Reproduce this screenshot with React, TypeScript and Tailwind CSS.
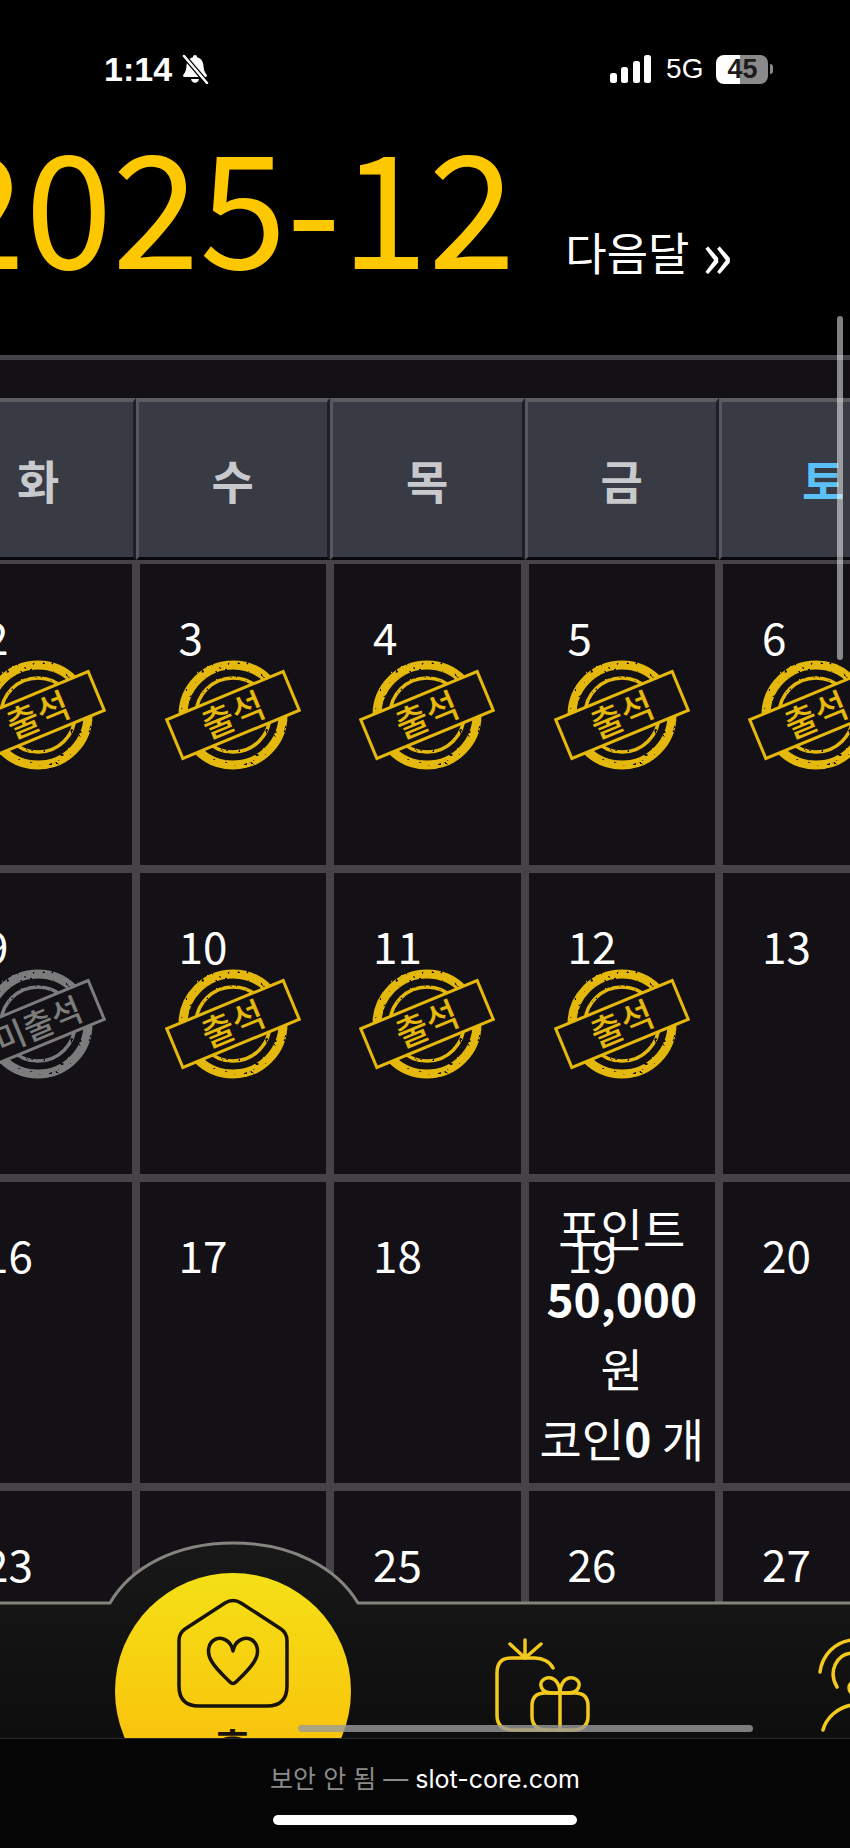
const FONT = "font-['Noto_Sans_CJK_KR','Noto_Sans',sans-serif]";

const WEEK = ['일', '월', '화', '수', '목', '금', '토'];

// december 2025 starts on a monday
const DAYS: (number | null)[] = [null, ...Array.from({ length: 31 }, (_, i) => i + 1)];
while (DAYS.length % 7) DAYS.push(null);

const ATTENDED = [1, 2, 3, 4, 5, 6, 8, 10, 11, 12];
const MISSED = [7, 9];

function Stamp({ label, color }: { label: string; color: string }) {
  return (
    <svg width="136" height="116" viewBox="0 0 136 116" fill="none">
      <defs>
        {/* worn ink look */}
        <filter id="worn" x="-5%" y="-5%" width="110%" height="110%">
          <feTurbulence type="fractalNoise" baseFrequency="0.22" numOctaves="2" seed="4" result="noise" />
          <feDisplacementMap in="SourceGraphic" in2="noise" scale="2" result="rough" />
          <feColorMatrix in="noise" type="matrix" values="0 0 0 0 0  0 0 0 0 0  0 0 0 0 0  0 0 0 -14 4.300" result="holes" />
          <feComposite in="rough" in2="holes" operator="out" />
        </filter>
      </defs>
      <g filter="url(#worn)">
        <circle cx="68" cy="58" r="50" stroke={color} strokeWidth="9" />
        <circle cx="68" cy="58" r="37" stroke={color} strokeWidth="3.500" />
      </g>
      <g transform="rotate(-22.5 68 58)">
        <rect x="5" y="37" width="126" height="42" fill="#131115" stroke={color} strokeWidth="3" />
        <text
          x="68"
          y="71"
          textAnchor="middle"
          fill={color}
          fontSize={label.length > 2 ? 33 : 35}
          fontWeight="500"
          fontFamily="'Noto Sans CJK KR', sans-serif"
        >
          {label}
        </text>
      </g>
    </svg>
  );
}

function DayCell({ day }: { day: number | null }) {
  const attended = day !== null && ATTENDED.includes(day);
  const missed = day !== null && MISSED.includes(day);

  return (
    <div className="relative h-[301px] bg-[#131115] pl-[39px] pt-[40px] text-[44px] leading-[64px] text-white">
      {day}
      {(attended || missed) && (
        <div className="absolute inset-0 flex items-center justify-center">
          <Stamp label={missed ? '미출석' : '출석'} color={missed ? '#7c7c7c' : '#e5b80b'} />
        </div>
      )}
      {day === 19 && (
        <div className="absolute inset-x-0 top-[10px] text-center text-[46px] leading-[70px]">
          <p>포인트</p>
          <p className="font-bold">50,000</p>
          <p>원</p>
          <p>코인<b>0</b> 개</p>
        </div>
      )}
    </div>
  );
}

function BellSlash() {
  return (
    <svg width="30" height="30" viewBox="0 0 30 30" fill="white">
      <path d="M15 1c1.300 0 2 .9 2 2.200 4.300 1 6.300 4.500 6.500 8.800.2 3.800 1 6 3 8.500.8 1 .3 2.500-1 2.500H4.500c-1.300 0-1.800-1.500-1-2.500 2-2.500 2.800-4.700 3-8.500.2-4.300 2.200-7.800 6.500-8.800C13 1.900 13.700 1 15 1z" />
      <path d="M11 25h8c-.3 2.400-2 3.800-4 3.800s-3.700-1.400-4-3.800z" />
      <path d="M4 2l23 27" stroke="black" strokeWidth="5" />
      <path d="M4 2l23 27" stroke="white" strokeWidth="2.500" strokeLinecap="round" />
    </svg>
  );
}

function StatusBar() {
  return (
    <div className="flex h-[116px] pt-[50px] font-['Liberation_Sans',sans-serif] text-white">
      <div className="ml-[104px] flex h-[38px] items-center gap-[8px] text-[34px] font-bold leading-none">
        1:14
        <BellSlash />
      </div>
      <div className="ml-[400px] flex h-[38px] items-center">
        <svg width="42" height="28" viewBox="0 0 42 28" fill="white">
          <rect x="0" y="18" width="7" height="10" rx="2.500" />
          <rect x="11" y="12" width="7" height="16" rx="2.500" />
          <rect x="23" y="6" width="7" height="22" rx="2.500" />
          <rect x="34" y="0" width="7" height="28" rx="2.500" />
        </svg>
        <span className="ml-[14px] text-[28px] leading-none">5G</span>
        <div className="ml-[13px] flex h-[29px] w-[52px] items-center justify-center rounded-[8px] bg-[linear-gradient(90deg,#fff_0,#fff_47%,#8a8a8a_47%,#8a8a8a_100%)] text-[27px] font-bold leading-none text-[#1c1c1c]">
          45
        </div>
        <div className="ml-[2px] h-[10px] w-[3px] rounded-r-full bg-[#8a8a8a]" />
      </div>
    </div>
  );
}

function HomeIcon() {
  return (
    <svg width="112" height="112" viewBox="0 0 112 112" fill="none" stroke="#17120a" strokeWidth="3.500" strokeLinejoin="round" strokeLinecap="round">
      <path d="M48 5 L8 31 Q2 35 2 43 V88 Q2 108 22 108 H90 Q110 108 110 88 V43 Q110 35 104 31 L64 5 Q56 0 48 5 Z" />
      <path
        transform="translate(0 -3)"
        d="M56 56 C54 45 45 42 39 44 C31 47 29 58 35 67 C40 75 48 82 53 87 Q56 90 59 87 C64 82 72 75 77 67 C83 58 81 47 73 44 C67 42 58 45 56 56 Z"
      />
    </svg>
  );
}

function GiftIcon() {
  return (
    <svg width="100" height="96" viewBox="0 0 100 96" fill="none" stroke="#f2c91c" strokeWidth="3.500" strokeLinecap="round" strokeLinejoin="round">
      <path d="M32 2 V20 M17 6 L32 20 L48 6" />
      <path d="M60 30 C57 24 50 20 42 20 H18 Q4 20 4 35 V77 Q4 92 20 92 H54" />
      <path d="M54 92 Q39 92 39 78 V68 Q39 55 52 55 H82 Q95 55 95 68 V78 Q95 92 80 92 Z" />
      <path d="M67 55 V92" />
      <path d="M67 55 C58 55 50 56 48 48 C47 42 53 39 58 40 C63 41 67 47 67 55 C67 47 71 41 76 40 C81 39 87 42 86 48 C84 56 76 55 67 55 Z" />
    </svg>
  );
}

function CareIcon() {
  return (
    <svg width="48" height="96" viewBox="0 0 48 96" fill="none" stroke="#f2c91c" strokeWidth="3.500" strokeLinecap="round">
      <path d="M2 34 C4 18 16 4 34 2" />
      <path d="M19 49 C10 34 18 16 34 15" />
      <circle cx="38" cy="50" r="7" />
      <path d="M5 92 C8 80 20 69 34 67" />
    </svg>
  );
}

function BottomNav() {
  return (
    <div className="absolute inset-x-0 top-[1538px] h-[200px]">
      {/* hump + top edge */}
      <svg className="absolute inset-0" width="850" height="200" viewBox="0 0 850 200">
        <defs>
          <linearGradient id="nav" x1="0" y1="0" x2="0" y2="1">
            <stop offset="0" stopColor="#181818" />
            <stop offset="1" stopColor="#0e0e0e" />
          </linearGradient>
        </defs>
        <path d="M0 65 H110 C130 30 175 5 233 5 C292 5 337 30 358 65 H850 V200 H0 Z" fill="url(#nav)" />
        <path
          d="M0 65 H110 C130 30 175 5 233 5 C292 5 337 30 358 65 H850"
          fill="none"
          stroke="#85847e"
          strokeWidth="3"
        />
      </svg>

      <div className="relative flex pl-[78px]">
        <div className="flex h-[200px] w-[309px] shrink-0 justify-center overflow-hidden">
          <div className="mt-[35px] flex h-[236px] w-[236px] shrink-0 flex-col items-center rounded-full bg-[linear-gradient(180deg,#f4e016,#fbb908)] pt-[25px]">
            <HomeIcon />
            <span className="mt-[11px] text-[38px] font-bold leading-[48px] text-[#17120a]">홈</span>
          </div>
        </div>
        <div className="w-[309px] shrink-0 pl-[106px] pt-[100px]">
          <GiftIcon />
        </div>
        <div className="w-[309px] shrink-0 pl-[122px] pt-[100px]">
          <CareIcon />
        </div>
      </div>
    </div>
  );
}

function BrowserBar() {
  return (
    <div className="absolute inset-x-0 bottom-0 flex h-[110px] flex-col items-center border-t border-[#2a2a2a] bg-[#060505] pt-[24px] font-['Inter','Noto_Sans_CJK_KR',sans-serif] text-[25px] leading-[32px]">
      <p className="text-[#8b8b8b]">
        보안 안 됨 — <span className="text-white">slot-core.com</span>
      </p>
      <div className="mt-[20px] h-[10px] w-[304px] rounded-full bg-white" />
    </div>
  );
}

export default function App() {
  return (
    <div className={`relative h-[1848px] w-[850px] overflow-hidden bg-black ${FONT}`}>
      <StatusBar />

      <div className="flex h-[239px] items-start">
        <h1 className="ml-[-62px] text-[157px] font-normal leading-[170px] text-[#fdc800]">2025-12</h1>
        <a className="ml-[50px] mt-[106px] flex items-center text-[45px] leading-[60px] text-white">
          다음달
          <span className="ml-[12px] mt-[-4px] text-[66px] font-normal leading-[60px]">»</span>
        </a>
      </div>

      <div className="ml-[-448px] w-[1400px] border-t-[5px] border-[#454347] bg-[#131115] pt-[38px]">
        <div className="grid grid-cols-[repeat(7,194.500px)] bg-[#0b0b10]">
          {WEEK.map((label, i) => (
            <div
              key={label}
              className={`flex h-[162px] items-center justify-center border-t-[4px] border-r-[3px] border-b-[3px] border-l-[3px] border-t-[#5b5c60] border-r-[#1c1e28] border-b-[#09090d] border-l-[#565860] bg-[#383a44] text-[46px] font-bold ${
                i === 6 ? 'pl-[14px] text-[#5bc0f8]' : i === 0 ? 'text-[#f87171]' : 'text-[#c8c9cd]'
              }`}
            >
              {label}
            </div>
          ))}
        </div>
        <div className="grid grid-cols-[repeat(7,186.500px)] gap-x-[8px] gap-y-[8px] bg-[#454347] px-[4px] pt-[4px]">
          {DAYS.map((day, i) => (
            <DayCell key={i} day={day} />
          ))}
        </div>
      </div>

      <BottomNav />
      <BrowserBar />

      {/* scrollbars */}
      <div className="absolute left-[837px] top-[316px] h-[344px] w-[6px] rounded-full bg-white/50" />
      <div className="absolute left-[298px] top-[1725px] h-[7px] w-[455px] rounded-full bg-[#9a9a9a]/80" />
    </div>
  );
}
